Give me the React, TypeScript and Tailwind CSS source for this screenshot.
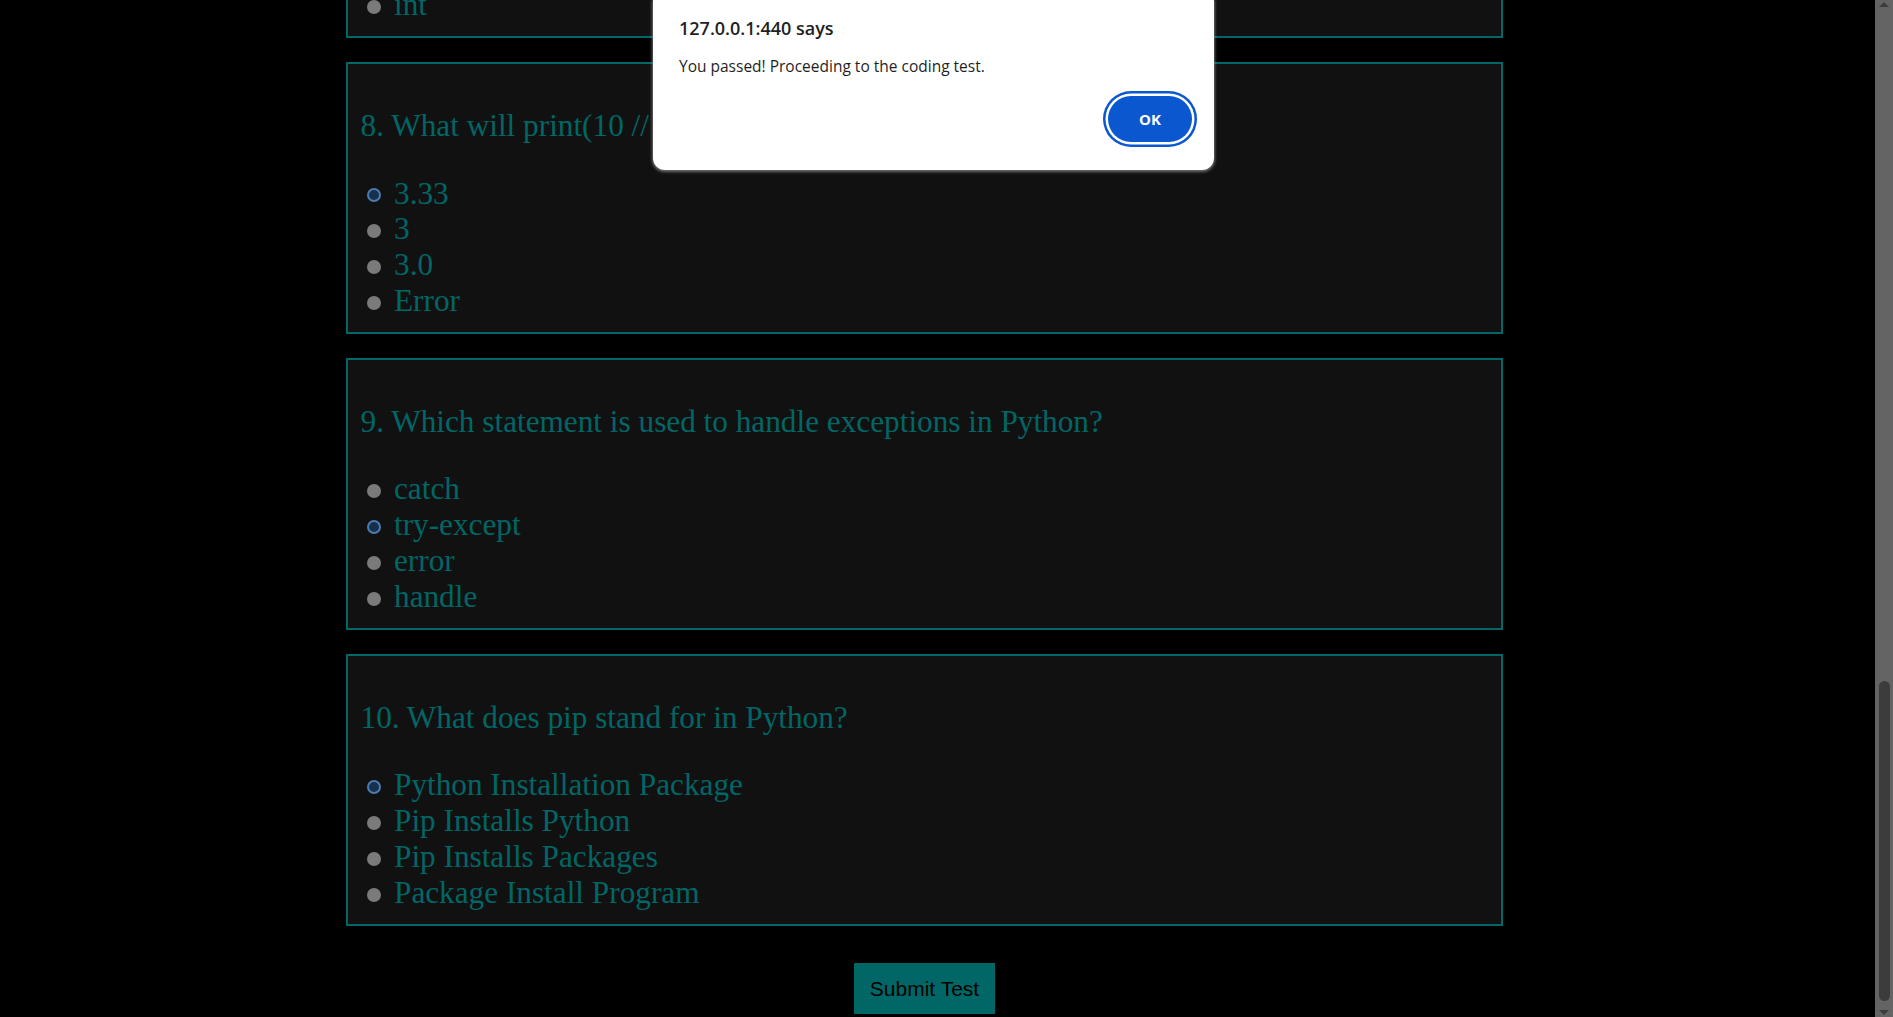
import React from "react"

interface Question {
  title: string
  options: string[]
  selected: number
}

const questions: Question[] = [
  {
    title: "7. Which data type is used for whole numbers in Python?",
    options: ["str", "float", "bool", "int"],
    selected: -1,
  },
  {
    title: "8. What will print(10 // 3) output?",
    options: ["3.33", "3", "3.0", "Error"],
    selected: 0,
  },
  {
    title: "9. Which statement is used to handle exceptions in Python?",
    options: ["catch", "try-except", "error", "handle"],
    selected: 1,
  },
  {
    title: "10. What does pip stand for in Python?",
    options: [
      "Python Installation Package",
      "Pip Installs Python",
      "Pip Installs Packages",
      "Package Install Program",
    ],
    selected: 0,
  },
]

function Radio({ checked }: { checked: boolean }) {
  if (checked) {
    return (
      <span className="mt-[4px] ml-[19px] mr-[13px] w-[14px] h-[14px] shrink-0 rounded-full border-[2.5px] border-[#4b7bb0] bg-[#17304d]" />
    )
  }
  return <span className="mt-[4px] ml-[19px] mr-[13px] w-[14px] h-[14px] shrink-0 rounded-full bg-[#7a7a7a]" />
}

function QuestionBox({ q }: { q: Question }) {
  return (
    <div className="border-2 border-[#006666] bg-[#111111] px-[12.5px] py-[13px] mb-[24px]">
      <h3 className="my-[31.25px] text-[31.25px] leading-[35.9px] font-normal text-[#006666]">{q.title}</h3>
      <div>
        {q.options.map((opt, i) => (
          <label key={opt} className="flex items-center h-[35.9px] -ml-[12.5px]">
            <Radio checked={i === q.selected} />
            <span className="text-[31.25px] leading-[35.9px] text-[#006666]">{opt}</span>
          </label>
        ))}
      </div>
    </div>
  )
}

function Scrollbar() {
  return (
    <div className="w-[18px] h-screen bg-[#646464] flex flex-col items-center justify-between shrink-0">
      <div className="w-0 h-0 mt-[2px] border-l-[5px] border-r-[5px] border-b-[5px] border-l-transparent border-r-transparent border-b-[#3c3c3c]" />
      <div className="flex flex-col items-center">
        <div className="w-[11px] h-[320px] rounded-full bg-[#3c3c3c] mb-[9px]" />
        <div className="w-0 h-0 mb-[2px] border-l-[5px] border-r-[5px] border-t-[5px] border-l-transparent border-r-transparent border-t-[#3c3c3c]" />
      </div>
    </div>
  )
}

export default function App() {
  return (
    <div className="relative h-screen w-full flex bg-black overflow-hidden" style={{ fontFamily: '"Liberation Serif", serif' }}>
      <div className="flex-1 h-screen overflow-hidden flex flex-col justify-end">
        <div className="w-[1157px] ml-[346px] pb-[3px]">
          {questions.map((q) => (
            <QuestionBox key={q.title} q={q} />
          ))}
          <div className="flex justify-center mt-[37px]">
            <button
              className="h-[51px] px-[16px] bg-[#006666] text-black text-[21px]"
              style={{ fontFamily: '"Liberation Sans", Arial, sans-serif' }}
            >
              Submit Test
            </button>
          </div>
        </div>
      </div>
      <Scrollbar />

      {/* browser alert */}
      <div
        className="absolute top-0 left-[653px] w-[561px] h-[170px] bg-white rounded-b-[12px] shadow-[0_1px_3px_1px_rgba(150,150,150,0.7)] pl-[26px] pr-[22px] pt-[15px] flex flex-col"
        style={{ fontFamily: '"Open Sans", "Noto Sans", sans-serif' }}
      >
        <div className="text-[18px] leading-[26px] font-semibold text-[#1f1f1f]">127.0.0.1:440 says</div>
        <div className="mt-[14px] text-[15.5px] leading-[22px] text-[#1f1f1f]">You passed! Proceeding to the coding test.</div>
        <div className="flex justify-end mt-[19px]">
          <button className="w-[84px] h-[46px] rounded-full bg-[#0b57d0] text-white text-[15px] font-bold shadow-[0_0_0_2.5px_#ffffff,0_0_0_5px_#0b57d0]">
            OK
          </button>
        </div>
      </div>
    </div>
  )
}
